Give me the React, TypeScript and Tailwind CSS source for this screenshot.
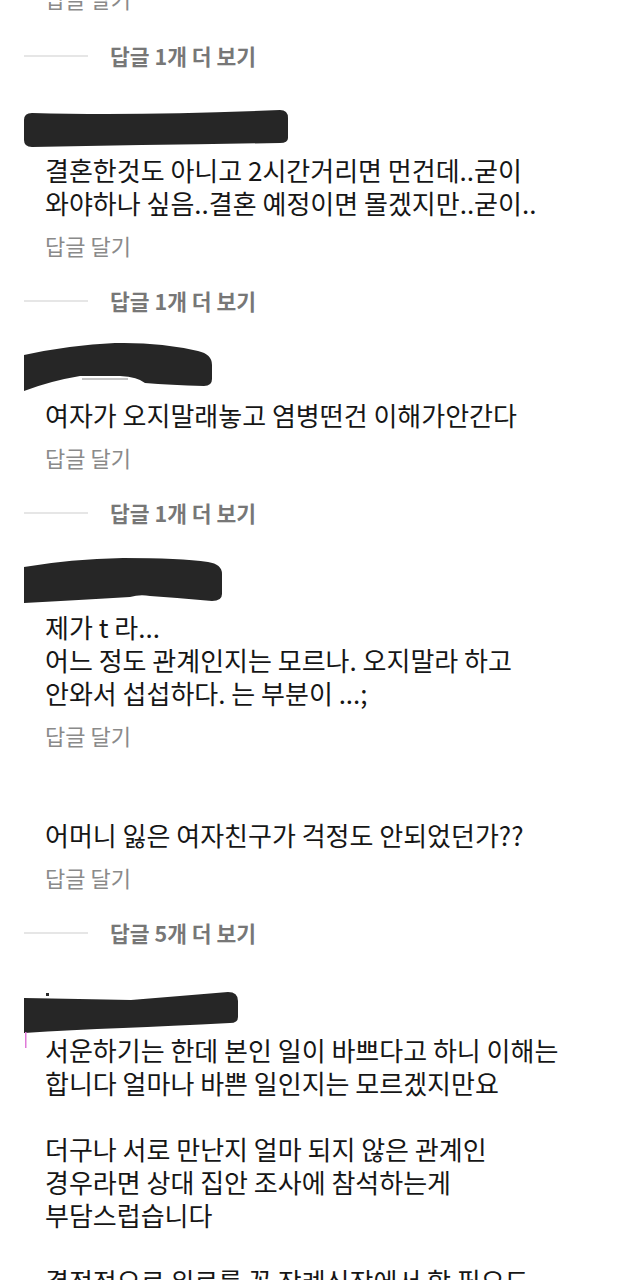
type Blob = {
  top: number;
  width: number;
  height: number;
  d: string;
  extra?: React.ReactNode;
};

type Thread = {
  header: number;
  blob?: Blob;
  lines: string[];
  more?: string;
};

const threads: Thread[] = [
  {
    header: 77,
    blob: {
      top: 34,
      width: 290,
      height: 38,
      d: "M24 10 Q24 3 32 3 Q140 6 280 0 Q288 0 288 8 L288 28 Q288 33 280 33 Q150 35 32 37 Q24 37 24 30 Z",
    },
    lines: [
      "결혼한것도 아니고 2시간거리면 먼건데..굳이",
      "와야하나 싶음..결혼 예정이면 몰겠지만..굳이..",
    ],
    more: "답글 1개 더 보기",
  },
  {
    header: 77,
    blob: {
      top: 22,
      width: 214,
      height: 50,
      d: "M24 12 Q70 2 115 0 Q160 -1 198 8 Q212 11 212 22 L212 36 Q212 43 204 43 Q170 42 145 40 Q138 34 120 33 L80 33 Q50 38 24 48 Z",
      extra: <rect x="82" y="35" width="46" height="2" fill="#c4c4c4" />,
    },
    lines: ["여자가 오지말래놓고 염병떤건 이해가안간다"],
    more: "답글 1개 더 보기",
  },
  {
    header: 77,
    blob: {
      top: 25,
      width: 224,
      height: 46,
      d: "M24 9 Q70 1 123 0 Q180 0 208 4 Q222 6 222 16 L222 36 Q222 43 212 43 Q180 40 150 38 Q140 36 130 39 Q80 42 24 45 Z",
    },
    lines: [
      "제가 t 라...",
      "어느 정도 관계인지는 모르나. 오지말라 하고",
      "안와서 섭섭하다. 는 부분이 ...;",
    ],
  },
  {
    header: 63,
    lines: ["어머니 잃은 여자친구가 걱정도 안되었던가??"],
    more: "답글 5개 더 보기",
  },
  {
    header: 79.5,
    blob: {
      top: 39,
      width: 240,
      height: 44,
      d: "M24 6 Q80 7 131 8 Q180 4 228 0 Q238 0 238 9 L238 25 Q238 31 230 31 Q170 34 123 36 Q70 38 24 41 Z",
      extra: (
        <>
          <rect x="46" y="1" width="3" height="3" fill="#2a2a2a" />
          <rect x="25" y="40" width="1.5" height="16" fill="#e07ad8" />
        </>
      ),
    },
    lines: [
      "서운하기는 한데 본인 일이 바쁘다고 하니 이해는",
      "합니다 얼마나 바쁜 일인지는 모르겠지만요",
      "",
      "더구나 서로 만난지 얼마 되지 않은 관계인",
      "경우라면 상대 집안 조사에 참석하는게",
      "부담스럽습니다",
      "",
      "결정적으로 위로를 꼭 장례식장에서 할 필요도",
    ],
  },
];

function ReplyLink({ className = "" }: { className?: string }) {
  return (
    <div className={`h-[40px] pl-[45px] flex items-center text-[22px] text-[#8a8a8a] ${className}`}>
      답글 달기
    </div>
  );
}

function MoreReplies({ label, className = "mt-[16px]" }: { label: string; className?: string }) {
  return (
    <div className={`h-[40px] flex items-center ${className}`}>
      <div className="ml-[24px] w-[64px] h-[2px] bg-[#e6e6e6]" />
      <span className="ml-[22px] text-[21.5px] font-bold text-[#777777]">{label}</span>
    </div>
  );
}

function Header({ height, blob }: { height: number; blob?: Blob }) {
  return (
    <div className="relative" style={{ height }}>
      {blob && (
        <svg
          className="absolute left-0 overflow-visible"
          style={{ top: blob.top }}
          width={blob.width}
          height={blob.height}
          viewBox={`0 0 ${blob.width} ${blob.height}`}
        >
          <path d={blob.d} fill="#262626" />
          {blob.extra}
        </svg>
      )}
    </div>
  );
}

export default function App() {
  return (
    <div
      className="w-[640px] h-[1280px] overflow-hidden bg-white"
      style={{ fontFamily: '"Noto Sans CJK KR", "Noto Sans", sans-serif' }}
    >
      <ReplyLink className="-mt-[22px]" />
      <MoreReplies label="답글 1개 더 보기" className="mt-[18px]" />

      {threads.map((t, i) => (
        <div key={i}>
          <Header height={t.header} blob={t.blob} />
          <div className="pl-[45px] text-[26px] leading-[33px] text-[#161616] whitespace-pre">
            {t.lines.map((line, j) => (
              <div key={j} className="h-[33px]">
                {line}
              </div>
            ))}
          </div>
          {i < threads.length - 1 && <ReplyLink className="mt-[6px]" />}
          {t.more && <MoreReplies label={t.more} />}
        </div>
      ))}
    </div>
  );
}
